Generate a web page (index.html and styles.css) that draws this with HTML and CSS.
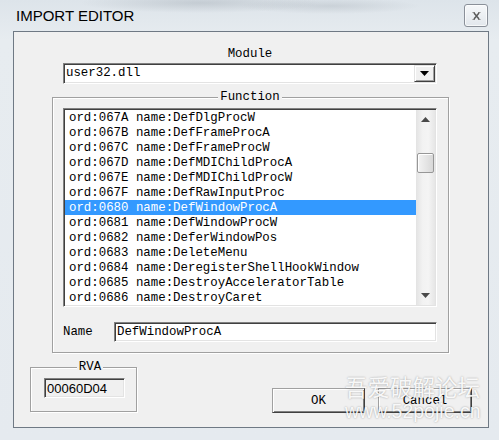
FILE: index.html
```html
<!DOCTYPE html>
<html>
<head>
<meta charset="utf-8">
<link rel="stylesheet" href="styles.css">
</head>
<body>
<div class="window">
  <div class="titlebar">
    <span class="title">IMPORT EDITOR</span>
    <div class="close">
      <svg width="9" height="8" viewBox="0 0 9 8">
        <path d="M0.5 0.5h2.5M6 0.5h2.5M0.5 7.5h2.5M6 7.5h2.5" stroke="#8a8a8a" stroke-width="1" fill="none"/>
        <path d="M2 1l5 6M7 1l-5 6" stroke="#5a5a5a" stroke-width="1.5" fill="none"/>
      </svg>
    </div>
  </div>
  <div class="client">
    <div class="module-label">Module</div>
    <div class="combo">
      <span class="combo-text">user32.dll</span>
      <div class="combo-btn">
        <svg width="9" height="5" viewBox="0 0 9 5"><path d="M0 0h9L4.5 5z" fill="#000"/></svg>
      </div>
    </div>
    <div class="group func">
      <div class="legend"><span>Function</span></div>
      <div class="listbox">
        <ul class="rows">
          <li>ord:067A name:DefDlgProcW</li>
          <li>ord:067B name:DefFrameProcA</li>
          <li>ord:067C name:DefFrameProcW</li>
          <li>ord:067D name:DefMDIChildProcA</li>
          <li>ord:067E name:DefMDIChildProcW</li>
          <li>ord:067F name:DefRawInputProc</li>
          <li class="sel">ord:0680 name:DefWindowProcA</li>
          <li>ord:0681 name:DefWindowProcW</li>
          <li>ord:0682 name:DeferWindowPos</li>
          <li>ord:0683 name:DeleteMenu</li>
          <li>ord:0684 name:DeregisterShellHookWindow</li>
          <li>ord:0685 name:DestroyAcceleratorTable</li>
          <li>ord:0686 name:DestroyCaret</li>
        </ul>
        <div class="scrollbar">
          <div class="arrow">
            <svg width="9" height="5" viewBox="0 0 9 5"><path d="M0 5h9L4.5 0z" fill="#4a4a4a"/></svg>
          </div>
          <div class="track"><div class="thumb"></div></div>
          <div class="arrow">
            <svg width="9" height="5" viewBox="0 0 9 5"><path d="M0 0h9L4.5 5z" fill="#4a4a4a"/></svg>
          </div>
        </div>
      </div>
      <div class="name-row">
        <span class="name-label">Name</span>
        <div class="edit name-edit">DefWindowProcA</div>
      </div>
    </div>
    <div class="bottom">
      <div class="group rva">
        <div class="legend"><span>RVA</span></div>
        <div class="edit rva-edit">00060D04</div>
      </div>
      <div class="btn ok">OK</div>
      <div class="btn cancel">Cancel</div>
    </div>
  </div>
  <div class="watermark">
    <div class="wm-cn">吾爱破解论坛</div>
    <div class="wm-url">www.52pojie.cn</div>
  </div>
</div>
</body>
</html>
```
FILE: styles.css
```css
* { box-sizing: border-box; }
html, body { margin: 0; padding: 0; }
body {
  width: 499px;
  height: 440px;
  overflow: hidden;
  background: #e4e9ee;
  font-family: "Liberation Mono", "DejaVu Sans Mono", monospace;
  font-size: 12.4px;
  color: #000;
}
.window {
  position: relative;
  width: 499px;
  height: 440px;
  display: flex;
  flex-direction: column;
  background:
    radial-gradient(ellipse 120px 10px at 200px 3px, rgba(120,130,140,0.25), transparent),
    radial-gradient(ellipse 90px 8px at 330px 6px, rgba(120,130,140,0.2), transparent),
    linear-gradient(#dde4ea, #e7ecf0 40px, #e5eaef);
}
.titlebar {
  height: 31px;
  display: flex;
  justify-content: space-between;
  align-items: flex-start;
  padding: 0 11px 0 16px;
}
.title {
  font-family: "Liberation Sans", Arial, sans-serif;
  font-size: 15px;
  line-height: 15px;
  margin-top: 8px;
}
.close {
  margin-top: 4px;
  width: 24px;
  height: 23px;
  border: 1px solid #8a9099;
  border-radius: 3px;
  background: linear-gradient(#f6f8fa, #e2e7ec);
  box-shadow: inset 0 0 0 1px rgba(255,255,255,0.7);
  display: flex;
  align-items: center;
  justify-content: center;
}
.client {
  margin-left: 13px;
  width: 476px;
  height: 397px;
  border: 1px solid #6f7984;
  background: #f0f0f0;
}
.module-label {
  margin: 15px 0 0 49px;
  width: 374px;
  height: 15px;
  line-height: 15px;
  text-align: center;
}
.combo {
  margin: 1px 0 0 49px;
  width: 374px;
  height: 21px;
  display: flex;
  align-items: center;
  justify-content: space-between;
  background: #fff;
  border: 1px solid;
  border-color: #808080 #fff #fff #808080;
  box-shadow: inset 1px 1px 0 #404040, inset -1px -1px 0 #e3e3e3;
  padding: 1px 1px 1px 2px;
}
.combo-text { line-height: 15px; white-space: pre; }
.combo-btn {
  width: 21px;
  height: 17px;
  background: #f0f0f0;
  border: 1px solid;
  border-color: #e3e3e3 #404040 #404040 #e3e3e3;
  box-shadow: inset 1px 1px 0 #fff, inset -1px -1px 0 #a0a0a0;
  display: flex;
  align-items: center;
  justify-content: center;
}
.group {
  border: 1px solid #a0a0a0;
  box-shadow: 1px 1px 0 #fff, inset 1px 1px 0 #fff;
}
.func {
  margin: 13px 0 0 38px;
  width: 397px;
  padding: 0 11px 10px 10px;
}
.legend {
  display: flex;
  justify-content: center;
  margin-top: -8px;
  height: 14px;
  line-height: 14px;
}
.legend span {
  background: #f0f0f0;
  padding: 0 2px;
}
.listbox {
  margin-top: 4px;
  width: 374px;
  height: 199px;
  display: flex;
  background: #fff;
  border: 1px solid;
  border-color: #808080 #fff #fff #808080;
  box-shadow: inset 1px 1px 0 #404040, inset -1px -1px 0 #e3e3e3;
  padding: 1px;
}
.rows {
  flex: 1;
  list-style: none;
  margin: 0;
  padding: 0;
  overflow: hidden;
}
.rows li {
  height: 15px;
  line-height: 16px;
  padding-left: 4px;
  white-space: pre;
}
.rows li.sel {
  background: #3399ff;
  color: #fff;
}
.scrollbar {
  width: 19px;
  display: flex;
  flex-direction: column;
  background: linear-gradient(90deg, #e3e3e3, #f2f2f2 35%, #f4f4f4 65%, #e6e6e6);
}
.arrow {
  height: 19px;
  display: flex;
  align-items: center;
  justify-content: center;
}
.track {
  flex: 1;
  padding: 24px 1px 0 1px;
}
.thumb {
  height: 20px;
  border: 1px solid #979797;
  border-radius: 2px;
  background: linear-gradient(90deg, #f3f3f3, #e6e6e6 50%, #d8d8d8);
  box-shadow: inset 1px 1px 0 #fff;
}
.name-row {
  margin-top: 15px;
  height: 20px;
  display: flex;
  align-items: center;
}
.name-label { width: 51px; }
.edit {
  height: 20px;
  line-height: 15px;
  padding: 2px 2px 0 2px;
  background: #fff;
  border: 1px solid;
  border-color: #808080 #fff #fff #808080;
  box-shadow: inset 1px 1px 0 #404040, inset -1px -1px 0 #e3e3e3;
  white-space: pre;
}
.name-edit { width: 323px; }
.bottom {
  margin-top: 14px;
  display: flex;
  align-items: flex-start;
}
.rva {
  margin-left: 16px;
  width: 107px;
  height: 45px;
  padding-left: 13px;
}
.rva-edit {
  margin-top: 4px;
  width: 81px;
  background: #f0f0f0;
  font-family: "Liberation Sans", Arial, sans-serif;
  font-size: 13px;
}
.btn {
  margin-top: 21px;
  height: 25px;
  display: flex;
  align-items: center;
  justify-content: center;
  background: #f0f0f0;
  border: 1px solid;
  border-color: #a0a0a0 #404040 #404040 #a0a0a0;
  box-shadow: inset 1px 1px 0 #fff, inset -1px -1px 0 #808080;
}
.ok { margin-left: 135px; width: 93px; }
.cancel { margin-left: 13px; width: 94px; }
.watermark {
  position: absolute;
  left: 345px;
  top: 372px;
  color: rgba(255,255,255,0.92);
  text-shadow: 0 0 2px rgba(0,0,0,0.35);
  font-family: "Noto Sans CJK SC", "Liberation Sans", sans-serif;
}
.wm-cn {
  font-size: 22.5px;
  line-height: 28px;
}
.wm-url {
  font-family: "Liberation Sans", Arial, sans-serif;
  font-size: 19.5px;
  line-height: 22px;
}
```
